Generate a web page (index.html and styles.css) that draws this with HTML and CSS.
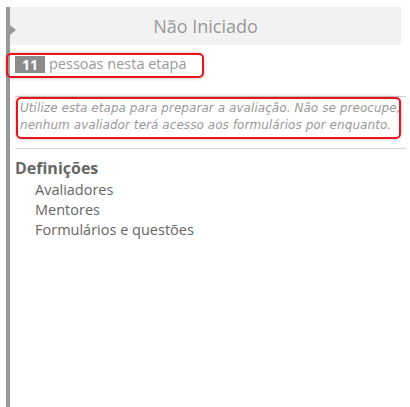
FILE: index.html
```html
<!DOCTYPE html>
<html lang="pt-BR">
<head>
    <meta charset="UTF-8">
    <meta name="viewport" content="width=device-width, initial-scale=1.0">
    <title>Etapa - Não Iniciado</title>
    <link rel="stylesheet" href="styles.css">
</head>
<body>
    <!-- Stage column -->
    <div class="stage">
        <span class="pointer"></span>

        <div class="stage-header">Não Iniciado</div>

        <div class="content">
            <div class="count highlight">
                <span class="badge">11</span>
                <span class="count-label">pessoas nesta etapa</span>
            </div>

            <hr class="divider">

            <p class="hint highlight">Utilize esta etapa para preparar a avaliação. Não se preocupe,<br>nenhum avaliador terá acesso aos formulários por enquanto.</p>

            <hr class="divider">

            <h3 class="section-title">Definições</h3>
            <ul class="section-list">
                <li>Avaliadores</li>
                <li>Mentores</li>
                <li>Formulários e questões</li>
            </ul>
        </div>
    </div>
</body>
</html>
```

FILE: styles.css
```css
/* General Styles */
body {
    margin: 0;
    padding: 0;
    background: #ffffff;
    font-family: "Open Sans", "Noto Sans", sans-serif;
    color: #666;
    overflow: hidden;
}

/* Stage column */
.stage {
    position: relative;
    margin: 7px 4px 0 6px;
    height: 400px;
    border-left: 4px solid #999;
}

.pointer {
    position: absolute;
    left: 0;
    top: 18px;
    width: 0;
    height: 0;
    border-top: 5px solid transparent;
    border-bottom: 5px solid transparent;
    border-left: 6px solid #999;
}

.stage-header {
    height: 38px;
    line-height: 38px;
    margin-right: 5px;
    background-color: #f2f2f2;
    color: #999;
    font-size: 18px;
    text-align: center;
}

.content {
    padding-left: 5px;
}

/* Red annotation boxes */
.highlight {
    border: 2px solid #e8141a;
    border-radius: 5px;
    box-shadow: 0 0 4px rgba(0, 0, 0, 0.25);
}

.count {
    display: flex;
    align-items: center;
    width: 187px;
    height: 21px;
    margin: 8px 0 0 -9px;
    padding: 0 0 0 7px;
}

.badge {
    display: inline-block;
    width: 30px;
    height: 17px;
    line-height: 17px;
    background-color: #8c8c8c;
    color: #ffffff;
    font-size: 14px;
    font-weight: bold;
    text-align: center;
    margin-top: -3px;
}

.count-label {
    margin-left: 4px;
    margin-top: -4px;
    color: #999;
    font-size: 14.5px;
}

.divider {
    margin: 0;
    border: none;
    border-top: 1px solid #d4d4d4;
}

.divider:first-of-type {
    margin-top: 18px;
}

.hint {
    margin: 0 5px 9px 1px;
    padding: 1px 0 3px 2px;
    color: #999;
    font-family: "DejaVu Sans", sans-serif;
    font-size: 12px;
    font-style: italic;
    letter-spacing: 0.06px;
    line-height: 17px;
    white-space: nowrap;
}

.section-title {
    margin: 9px 0 0 0;
    font-size: 16px;
    font-weight: bold;
    line-height: 20px;
    color: #666;
}

.section-list {
    list-style: none;
    margin: 2px 0 0 0;
    padding-left: 20px;
    font-size: 14.5px;
    line-height: 20px;
    color: #666;
}
```
